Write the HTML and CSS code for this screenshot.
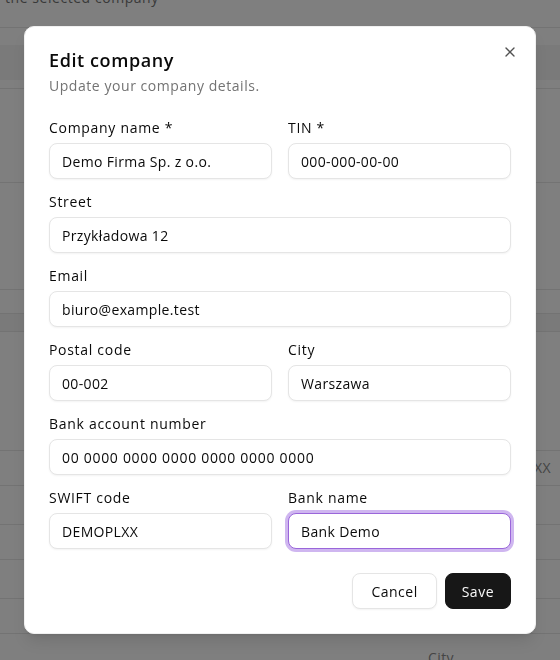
FILE: index.html
```html
<!DOCTYPE html>
<html lang="en">
<head>
<meta charset="utf-8">
<title>Edit company</title>
<link rel="stylesheet" href="styles.css">
</head>
<body>
<div class="page">
  <div class="row row-top"><p class="lead">the selected company</p></div>
  <div class="gap-17"></div>
  <div class="row row-head"><div class="band"></div></div>
  <div class="row h93"></div>
  <div class="row h106"></div>
  <div class="row h23"></div>
  <div class="row h17 shaded"></div>
  <div class="row h118"></div>
  <div class="row h34 row-swift"><span class="cell-text">DEMOPLXX</span></div>
  <div class="row h38"></div>
  <div class="row h34"></div>
  <div class="row h38"></div>
  <div class="row h34"></div>
  <div class="row row-city"><span class="cell-text">City</span></div>
</div>
<div class="overlay"></div>

<div class="dialog" role="dialog" aria-labelledby="dlg-title">
  <button class="close" type="button" aria-label="Close">
    <svg viewBox="0 0 24 24" width="16" height="16" fill="none" stroke="currentColor" stroke-width="2" stroke-linecap="round" stroke-linejoin="round"><path d="M18 6 6 18"/><path d="m6 6 12 12"/></svg>
  </button>
  <div class="dialog-header">
    <h2 class="title" id="dlg-title">Edit company</h2>
    <p class="desc">Update your company details.</p>
  </div>
  <form class="form">
    <div class="field"><label class="label">Company name *</label><input class="input" value="Demo Firma Sp. z o.o."></div>
    <div class="field"><label class="label">TIN *</label><input class="input" value="000-000-00-00"></div>
    <div class="field span-2"><label class="label">Street</label><input class="input" value="Przykładowa 12"></div>
    <div class="field span-2"><label class="label">Email</label><input class="input" value="biuro@example.test"></div>
    <div class="field"><label class="label">Postal code</label><input class="input" value="00-002"></div>
    <div class="field"><label class="label">City</label><input class="input" value="Warszawa"></div>
    <div class="field span-2"><label class="label">Bank account number</label><input class="input input-digits" value="00 0000 0000 0000 0000 0000 0000"></div>
    <div class="field"><label class="label">SWIFT code</label><input class="input" value="DEMOPLXX"></div>
    <div class="field"><label class="label">Bank name</label><input class="input is-focused" value="Bank Demo"></div>
    <div class="actions span-2">
      <button class="btn btn-outline" type="button">Cancel</button>
      <button class="btn btn-primary" type="submit">Save</button>
    </div>
  </form>
</div>
</body>
</html>
```

FILE: styles.css
```css
* { box-sizing: border-box; }
html, body { margin: 0; padding: 0; }
body {
  width: 560px;
  height: 660px;
  overflow: hidden;
  background: #ffffff;
  font-family: "Open Sans", "Liberation Sans", sans-serif;
  color: #0a0a0a;
  letter-spacing: 0.55px;
}

/* background page */
.page { width: 560px; }
.row { border-bottom: 1px solid #e6e6e6; box-sizing: content-box; }
.row-top { height: 27px; overflow: visible; }
.lead {
  margin: 0;
  padding-left: 5px;
  font-size: 14px;
  line-height: 20px;
  color: #737373;
  transform: translateY(-12px);
}
.gap-17 { height: 17px; }
.row-head { height: 43px; }
.band { height: 35px; background: #f4f4f4; }
.h93 { height: 93px; }
.h106 { height: 106px; }
.h23 { height: 23px; }
.h17 { height: 17px; }
.shaded { background: #f4f4f4; }
.h118 { height: 118px; }
.h34 { height: 34px; }
.h38 { height: 38px; }
.row-swift { display: flex; align-items: center; justify-content: flex-end; padding-right: 9px; }
.cell-text { font-size: 14px; line-height: 20px; color: #8a8a8a; letter-spacing: 0.4px; }
.row-city { border-bottom: 0; height: 26px; padding: 12px 0 0 428px; }

.overlay {
  position: fixed;
  inset: 0;
  background: rgba(0, 0, 0, 0.5);
}

/* dialog */
.dialog {
  position: absolute;
  left: 24px;
  top: 26px;
  width: 512px;
  background: #ffffff;
  border: 1px solid #f0f0f0;
  border-radius: 10px;
  padding: 24px;
  box-shadow: 0 10px 15px -3px rgba(0,0,0,0.1), 0 4px 6px -4px rgba(0,0,0,0.1);
}
.close {
  position: absolute;
  top: 17px;
  right: 17px;
  width: 16px;
  height: 16px;
  padding: 0;
  border: 0;
  background: transparent;
  color: #0a0a0a;
  opacity: 0.7;
  display: flex;
}
.dialog-header { display: flex; flex-direction: column; gap: 7px; }
.title {
  margin: 0;
  font-size: 18px;
  line-height: 18px;
  font-weight: 600;
  letter-spacing: 0.6px;
}
.desc {
  margin: 0;
  font-size: 14px;
  line-height: 20px;
  color: #737373;
}
.form {
  margin-top: 25px;
  display: grid;
  grid-template-columns: 1fr 1fr;
  column-gap: 16px;
  row-gap: 16px;
}
.span-2 { grid-column: 1 / -1; }
.field { display: flex; flex-direction: column; gap: 8px; }
.label {
  font-size: 14px;
  line-height: 14px;
  font-weight: 500;
  letter-spacing: 0.7px;
}
.input {
  height: 36px;
  width: 100%;
  border: 1px solid #e5e5e5;
  border-radius: 8px;
  padding: 0 12px;
  font: inherit;
  font-size: 14px;
  letter-spacing: 0.35px;
  color: #0a0a0a;
  background: #ffffff;
  box-shadow: 0 1px 2px rgba(0,0,0,0.05);
  outline: none;
}
.input-digits { letter-spacing: 0.7px; }
.is-focused {
  border-color: #9a66da;
  box-shadow: 0 0 0 3px rgba(160, 110, 225, 0.5);
}
.actions {
  margin-top: 8px;
  display: flex;
  justify-content: flex-end;
  gap: 8px;
}
.btn {
  height: 36px;
  padding: 0 16px;
  border-radius: 8px;
  font: inherit;
  font-size: 14px;
  font-weight: 500;
  letter-spacing: 0.5px;
  cursor: pointer;
}
.btn-outline {
  padding: 0 18px;
  background: #ffffff;
  border: 1px solid #e5e5e5;
  color: #0a0a0a;
  box-shadow: 0 1px 2px rgba(0,0,0,0.05);
}
.btn-primary {
  background: #171717;
  border: 1px solid #171717;
  color: #fafafa;
}
```
